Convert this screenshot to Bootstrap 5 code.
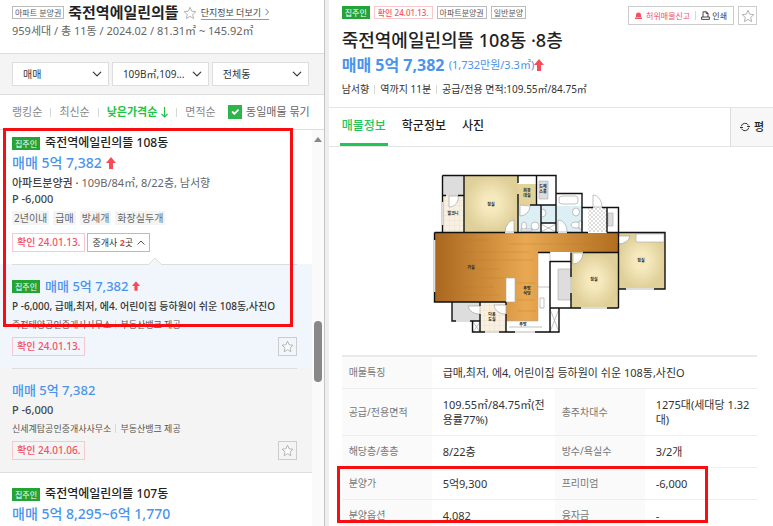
<!DOCTYPE html>
<html lang="ko">
<head>
<meta charset="utf-8">
<meta name="viewport" content="width=device-width, initial-scale=1">
<title>죽전역에일린의뜰 108동</title>
<link rel="stylesheet" href="https://cdn.jsdelivr.net/npm/bootstrap@5.3.0/dist/css/bootstrap.min.css">
<style>
  body { font-family: "Noto Sans", "Noto Sans CJK KR", sans-serif; font-size: 11px; line-height: 16px; color: #333; background: #eee; }
  a { color: inherit; text-decoration: none; }
  button { font-family: inherit; }
  svg { display: block; flex: none; }
  .list-pane { width: 42%; border-right: 1px solid #c4c4c4; }

  .complex-head { padding: 3px 12px 13px; border-bottom: 1px solid #ddd; }
  .complex-name { font-size: 15px; line-height: 19px; font-weight: 700; color: #222; margin: 0; }
  .kind { font-size: 8px; line-height: 11px; border: 1px solid #bbb; padding: 0 2px; color: #555; white-space: nowrap; }
  .more-link { font-size: 9px; line-height: 13px; border-bottom: 1px solid #999; color: #444; }
  .complex-sum { font-size: 11px; line-height: 18px; color: #666; margin: 0; }

  .filters { background: #f4f4f4; padding: 8px 15px 8px 12px; gap: 3px; border-bottom: 1px solid #ddd; }
  .filters .form-select { font-size: 10px; line-height: 14px; height: 24px; padding: 4px 22px 4px 10px; border: 1px solid #ddd; border-radius: 0; color: #333; background-size: 10px 10px; background-position: right 6px center; min-width: 0; text-overflow: clip; }
  .sorts { padding: 9px 14px 9px 12px; color: #888; border-bottom: 1px solid #ddd; }
  .sep { width: 1px; height: 9px; background: #d8d8d8; }
  .sorts .on { color: #1ec545; font-weight: 700; }
  .sorts .form-check-input { width: 14px; height: 14px; margin: 0; border-radius: 0; }
  .sorts .form-check-input:checked { background-color: #2db44a; border-color: #2db44a; }
  .sorts label { color: #666; }

  .owner { background: #24a337; color: #fff; font-size: 8px; line-height: 13px; padding: 0 3px; white-space: nowrap; }
  .item { padding: 4px 15px 12px 12px; background: #fff; }
  .item-name { font-size: 12px; line-height: 18px; font-weight: 500; color: #222; margin: 0; }
  .price { font-size: 14px; line-height: 22px; font-weight: 500; color: #4a94ec; }
  .item p { margin: 0; }
  .meta { color: #666; line-height: 17px; }
  .meta b, .premium { font-weight: 500; color: #444; }
  .premium { line-height: 16px; }
  .tagbox { background: #f4f4f4; color: #666; font-size: 10px; line-height: 14px; padding: 0 2px; }
  .checked { border: 1px solid #f9c8cc; color: #f6505e; font-size: 10px; line-height: 17px; padding: 0 4px; font-weight: 500; background: #fff; white-space: nowrap; }
  .agents { border: 1px solid #bbb; background: #fff; color: #333; font-size: 9px; line-height: 17px; padding: 0 4px; }
  .agents b { color: #f6404e; }
  .pair { gap: 2px; }
  .badged { gap: 5px; }
  .fav { border: 1px solid #ccc; background: transparent; width: 19px; height: 19px; padding: 0; display: grid; place-items: center; }
  .sub { padding: 0 15px 0 12px; }
  .sub-in { border-top: 1px solid #ddd; padding: 10px 0 12px; position: relative; }
  .sub.sel { background: #f1f6fd; }
  .sub.more { background: #f4f4f4; border-bottom: 1px solid #ddd; }
  .sub .price { font-size: 13px; line-height: 22px; }
  .sub p { margin: 0; white-space: nowrap; }
  .sub .desc { color: #333; font-size: 10px; line-height: 18px; font-weight: 500; }
  .sub .premium { line-height: 18px; }
  .agency { font-size: 9px; line-height: 19px; color: #555; }
  .sub .foot { margin-top: 3px; }
  .sub .checked { background: transparent; }
  .notch { position: absolute; left: 136px; top: -8px; }
  .marker { position: absolute; border: 3px solid #f90d10; pointer-events: none; }
  .marker-list { left: 3px; right: 31px; top: 128px; height: 199px; }
  .marker-table { left: -5px; right: 49px; top: 111px; height: 57px; }
  .rail { width: 12px; background: #fafafa; padding: 7px 2px 0; }
  .thumb { width: 8px; height: 61px; border-radius: 4px; background: #888; margin-top: 179px; }

  .detail-pane { margin-left: 4px; }
  .detail-head { padding: 6px 16px 10px 13px; border-bottom: 1px solid #e4e4e4; }
  .detail-head .chip { font-size: 8px; line-height: 11px; border: 1px solid #bbb; padding: 0 2px; color: #555; }
  .detail-head .chip.red { border-color: #f9c8cc; color: #f6505e; font-weight: 500; padding: 0 3px; }
  .detail-name { font-size: 18px; line-height: 26px; font-weight: 500; color: #222; margin: 2px 0 0; }
  .detail-price { font-size: 16px; line-height: 24px; font-weight: 700; color: #4a94ec; }
  .detail-price small { font-size: 11px; font-weight: 400; }
  .detail-meta { font-size: 10px; line-height: 16px; margin-top: 4px; }
  .detail-meta .sep { margin: 0 1px; }
  .detail-meta, .agency { white-space: nowrap; }
  .tools { border: 1px solid #ccc; height: 19px; padding: 0 6px; gap: 5px; }
  .tools button { border: 0; background: none; padding: 0; font-size: 8px; line-height: 15px; color: #333; }
  .tools .report { color: #f6505e; }
  .tabs { border-bottom: 1px solid #e4e4e4; padding-left: 11px; height: 39px; }
  .tabs .nav-link { font-size: 12px; line-height: 17px; font-weight: 500; color: #222; padding: 9px 2px; border-bottom: 3px solid transparent; margin-right: 12px; }
  .tabs .nav-link.active { color: #1fc55b; border-color: #1fc55b; }
  .unit { background: #f7f7f7; border: 0; border-left: 1px solid #ddd; font-size: 11px; font-weight: 500; color: #222; width: 43px; padding: 0; }
  .detail-body { padding: 27px 16px 0 13px; }
  .plan { width: 234px; margin: 0 auto 19px; }
  .facts { border-top: 2px solid #e9e9e9; margin: 0; table-layout: fixed; width: 100%; }
  .facts th, .facts td { border-bottom: 1px solid #eee; vertical-align: middle; line-height: 15px; }
  .facts th { background: #fafafa; color: #777; font-weight: 400; font-size: 10px; padding: 8px 7px; }
  .facts td { color: #333; padding: 8px 4px 8px 11px; }
  .facts .c1 { width: 90px; }
  .facts .c2 { width: 123px; }
  .plan text { font: 700 4px "Noto Sans CJK KR", sans-serif; fill: #222; text-anchor: middle; }
</style>
<script src="https://cdn.jsdelivr.net/npm/bootstrap@5.3.0/dist/js/bootstrap.bundle.min.js"></script>
</head>
<body>
<svg width="0" height="0" class="position-absolute" aria-hidden="true">
  <symbol id="star" viewBox="0 0 14 14"><path d="M7 1.3 8.7 5.2 12.9 5.6 9.7 8.4 10.6 12.6 7 10.4 3.4 12.6 4.3 8.4 1.1 5.6 5.3 5.2Z" fill="#fff" stroke="#aaa" stroke-width=".9"/></symbol>
  <symbol id="up" viewBox="0 0 10 12"><path d="M5 0 10 6H7V12H3V6H0Z" fill="#f74b5a"/></symbol>
</svg>
<div class="d-flex vh-100 overflow-hidden">

  <aside class="list-pane bg-white flex-shrink-0 d-flex flex-column position-relative overflow-hidden">
    <header class="complex-head">
      <div class="d-flex align-items-center text-nowrap">
        <span class="kind">아파트 분양권</span>
        <h1 class="complex-name ms-1">죽전역에일린의뜰</h1>
        <svg class="ms-1" width="14" height="14"><use href="#star"/></svg>
        <a href="#" class="more-link ms-1 d-flex align-items-center">단지정보 더보기<svg class="ms-1" width="4" height="8" viewBox="0 0 4 8"><path d="M.5.8 3.5 4 .5 7.2" fill="none" stroke="#777"/></svg></a>
      </div>
      <p class="complex-sum text-nowrap">959세대 / 총 11동 / 2024.02 / 81.31㎡ ~ 145.92㎡</p>
    </header>
    <form class="filters d-flex">
      <select class="form-select" aria-label="거래유형"><option>매매</option></select>
      <select class="form-select" aria-label="면적"><option>109B㎡,109...</option></select>
      <select class="form-select" aria-label="동"><option>전체동</option></select>
    </form>
    <div class="sorts d-flex align-items-center justify-content-between text-nowrap">
      <nav class="d-flex align-items-center gap-2">
        <a href="#">랭킹순</a><i class="sep"></i><a href="#">최신순</a><i class="sep"></i>
        <a href="#" class="on d-flex align-items-center">낮은가격순<svg class="ms-1" width="7" height="11" viewBox="0 0 7 11"><path d="M3.5 0V10M.5 7 3.5 10 6.5 7" fill="none" stroke="#1ec545" stroke-width="1.2"/></svg></a>
        <i class="sep"></i><a href="#">면적순</a>
      </nav>
      <div class="d-flex align-items-center gap-1">
        <input class="form-check-input" type="checkbox" id="group" checked><label for="group">동일매물 묶기</label>
      </div>
    </div>

    <div class="d-flex flex-grow-1 overflow-hidden">
      <div class="flex-grow-1 overflow-hidden">
        <article class="item">
          <div class="badged d-flex align-items-center"><span class="owner">집주인</span><h2 class="item-name">죽전역에일린의뜰 108동</h2></div>
          <div class="price d-flex align-items-center">매매 5억 7,382<svg class="ms-1" width="10" height="12"><use href="#up"/></svg></div>
          <p class="meta"><b>아파트분양권 ·</b> 109B/84㎡, 8/22층, 남서향</p>
          <p class="premium">P -6,000</p>
          <div class="d-flex gap-1 mt-1"><span class="tagbox">2년이내</span><span class="tagbox">급매</span><span class="tagbox">방세개</span><span class="tagbox">화장실두개</span></div>
          <div class="pair d-flex mt-2"><span class="checked">확인 24.01.13.</span>
            <button type="button" class="agents d-flex align-items-center">중개사&nbsp;<b>2</b>곳<svg class="ms-1" width="8" height="5" viewBox="0 0 8 5"><path d="M.5 4.5 4 1 7.5 4.5" fill="none" stroke="#555"/></svg></button></div>
        </article>
        <article class="sub sel"><div class="sub-in">
          <svg class="notch" width="14" height="8" viewBox="0 0 14 8"><path d="M0 8 7 1 14 8" fill="#f4f4f4" stroke="#ddd"/></svg>
          <div class="badged d-flex align-items-center"><span class="owner">집주인</span><span class="price d-flex align-items-center">매매 5억 7,382<svg class="ms-1" width="8" height="10"><use href="#up"/></svg></span></div>
          <p class="desc">P -6,000, 급매,최저, 에4. 어린이집 등하원이 쉬운 108동,사진O</p>
          <div class="agency d-flex align-items-center gap-1">죽전태양공인중개사사무소<i class="sep"></i>부동산뱅크 제공</div>
          <div class="foot d-flex justify-content-between"><span class="checked">확인 24.01.13.</span><button type="button" class="fav" aria-label="관심매물"><svg width="13" height="13"><use href="#star"/></svg></button></div>
        </div></article>
        <article class="sub more"><div class="sub-in">
          <div class="price">매매 5억 7,382</div>
          <p class="premium">P -6,000</p>
          <div class="agency d-flex align-items-center gap-1">신세계탑공인중개사사무소<i class="sep"></i>부동산뱅크 제공</div>
          <div class="foot d-flex justify-content-between"><span class="checked">확인 24.01.06.</span><button type="button" class="fav" aria-label="관심매물"><svg width="13" height="13"><use href="#star"/></svg></button></div>
        </div></article>
        <article class="item pt-2 mt-1">
          <div class="badged d-flex align-items-center"><span class="owner">집주인</span><h2 class="item-name">죽전역에일린의뜰 107동</h2></div>
          <div class="price">매매 5억 8,295~6억 1,770</div>
        </article>
      </div>
      <div class="rail flex-shrink-0"><svg width="8" height="5" viewBox="0 0 8 5"><path d="M4 0 8 5H0Z" fill="#888"/></svg><div class="thumb"></div></div>
    </div>
    <div class="marker marker-list"></div>
  </aside>

  <main class="detail-pane bg-white flex-grow-1 overflow-hidden">
    <header class="detail-head text-nowrap">
      <div class="d-flex justify-content-between align-items-start">
        <div class="d-flex gap-1"><span class="owner">집주인</span><span class="chip red">확인 24.01.13.</span><span class="chip">아파트분양권</span><span class="chip">일반분양</span></div>
        <div class="d-flex gap-1">
          <div class="tools d-flex align-items-center">
            <button type="button" class="report d-flex align-items-center gap-1"><svg width="7" height="7" viewBox="0 0 7 7"><path d="M1 5V3a2.5 2.5 0 0 1 5 0v2ZM0 5.5h7V7H0Z" fill="#f6505e"/></svg>허위매물신고</button>
            <i class="sep"></i>
            <button type="button" class="d-flex align-items-center"><svg width="9" height="9" viewBox="0 0 9 9"><path d="M2 6V.8H5.5L7 2.3V6M5.2.8V2.5H7M.6 6H8.4V8.4H.6Z" fill="none" stroke="#333" stroke-width=".9"/></svg>&nbsp;인쇄</button>
          </div>
          <button type="button" class="fav" aria-label="관심매물"><svg width="14" height="14"><use href="#star"/></svg></button>
        </div>
      </div>
      <h2 class="detail-name">죽전역에일린의뜰 108동 ·8층</h2>
      <div class="detail-price d-flex align-items-center">매매 5억 7,382&nbsp;<small>(1,732만원/3.3㎡)</small><svg width="10" height="12"><use href="#up"/></svg></div>
      <div class="detail-meta d-flex align-items-center gap-1">남서향<i class="sep"></i>역까지 11분<i class="sep"></i>공급/전용 면적:109.55㎡/84.75㎡</div>
    </header>
    <div class="tabs d-flex justify-content-between">
      <nav class="nav flex-nowrap text-nowrap"><a class="nav-link active" href="#">매물정보</a><a class="nav-link" href="#">학군정보</a><a class="nav-link" href="#">사진</a></nav>
      <button type="button" class="unit d-flex align-items-center justify-content-center gap-1"><svg width="10" height="10" viewBox="0 0 10 10"><path d="M1.2 4.3A4 4 0 0 1 8.6 3.4M8.8 5.7A4 4 0 0 1 1.4 6.6M7 4.5H10M0 5.5H3" fill="none" stroke="#333"/></svg>평</button>
    </div>
    <div class="detail-body">
      <svg class="plan" height="162" viewBox="433 174 234 162" role="img" aria-label="평면도">
        <defs>
          <radialGradient id="room"><stop offset=".3" stop-color="#f5e9bd"/><stop offset="1" stop-color="#dfcf98"/></radialGradient>
          <linearGradient id="wood"><stop offset="0" stop-color="#a8661f"/><stop offset=".3" stop-color="#d08e3c"/><stop offset=".5" stop-color="#e9a852"/><stop offset="1" stop-color="#b06e1f"/></linearGradient>
          <pattern id="tile" width="5" height="5" patternUnits="userSpaceOnUse"><path d="M0 0H5V5H0Z" fill="#f8f0e0"/><path d="M0 0H5M0 0V5" stroke="#e6dac6" stroke-width=".6"/></pattern>
          <pattern id="chk" width="4" height="4" patternUnits="userSpaceOnUse"><path d="M0 0H4V4H0Z" fill="#fff"/><path d="M0 0H2V2H0ZM2 2H4V4H2Z" fill="#ddd"/></pattern>
        </defs>
        <path d="M443 175H465V196H443ZM453 302H481V321H453Z" fill="#ddd"/>
        <path d="M443 196H465V232H443ZM481 302H507V332H481Z" fill="url(#tile)"/>
        <rect x="465" y="175" width="54" height="57" fill="url(#room)"/>
        <rect x="519" y="184" width="19" height="21" fill="#e2d39b"/>
        <path d="M519 205H557V223H542V232H519ZM557 206H583V232H557Z" fill="#dceff5"/>
        <path d="M589 207H608V232H589Z" fill="url(#chk)"/>
        <path d="M435 233H619V252H539V321H507V302H435Z" fill="url(#wood)"/>
        <path d="M440 240H490M510 244H590M450 252H530M470 260H535M440 269H500M480 278H505M518 283H536M445 287H495M518 300H536M460 295H500M518 311H537" stroke="#bd7a2a" stroke-width=".5" opacity=".6"/>
        <rect x="572" y="252" width="47" height="56" fill="url(#room)"/>
        <rect x="619" y="233" width="47" height="56" fill="url(#room)"/>
        <path d="M507 278H516V302H507ZM637 234H665V242H637ZM539 252H551V332H507V321H539Z" fill="#fff" stroke="#aaa" stroke-width=".6"/>
        <path d="M540 181H549V199H540ZM609 213H614V226H609ZM559 269H572V300H559Z" fill="#ddd" stroke="#aaa" stroke-width=".6"/>
        <g fill="#fff" stroke="#999" stroke-width=".6">
          <path d="M450 196V207A9 9 0 0 0 459 196ZM515 232V220A10 12 0 0 0 506 232ZM521 205V216A10 10 0 0 0 531 206ZM559 232V220A9 11 0 0 1 568 232ZM603 207H594V195A9 12 0 0 1 603 207ZM481 306H469A11 10 0 0 0 481 314ZM507 305H495A11 10 0 0 0 507 314ZM574 253V264A10 11 0 0 0 584 253ZM619 236H631A12 9 0 0 1 619 244Z"/>
          <rect x="560" y="196" width="19" height="8" rx="3"/>
          <ellipse cx="577" cy="212" rx="3.5" ry="4"/><ellipse cx="577" cy="225" rx="5" ry="3"/><path d="M580 221H583V229H580Z"/>
          <circle cx="536" cy="226" r="4"/><ellipse cx="525" cy="226" rx="2.5" ry="4"/><path d="M522 229H533V231H522ZM543 209A4 4 0 0 1 543 217"/>
          <path d="M542 224 557 232M557 224 542 232M474 322 481 332M481 322 474 332M551 309 560 332M560 309 551 332" fill="none"/>
          <path d="M539 287H551M541 298H545V308H541ZM510 327H543" fill="none"/>
        </g>
        <g fill="none" stroke="#111" stroke-width="1.4">
          <path d="M443.500 175.500H557V232.500M443.500 175.500V232.500M465 175.500V232.500M443 195.500H447M459 195.500H465M519 175.500V183M519 194V232.500M537.500 175.500V205M531 205H557M542 205V232.500M542 223H557M557 193.500H583V232.500M583 207.500H594M603 207.500H619.500V308M608 207.500V232.500"/>
          <path d="M435.500 232.500H506M515 232.500H559M568 232.500H589M608 232.500H666V289H619M435.500 232.500V302H507M453 302V321H481M481 302V306M481 314V332M473.500 321V332H560V308M507 302V305M507 314V332M539 252.500H551M584 252.500H619M551 261V332M551 261.500H572M572 252.500V308M551 308H619.500"/>
        </g>
        <path d="M435.500 240V292M443.500 202V225M457 321H471M486 332H500M516 332H536M582 308H608M627 289H655M572 277V293" stroke="#ddd" stroke-width="1.800"/>
        <text x="492" y="206">침실</text><text x="454" y="215">발코니</text><text x="472" y="269">거실</text><text x="595" y="281">침실</text><text x="642" y="262">침실</text>
        <text x="528" y="192">화장</text><text x="528" y="197">대실</text><text x="544" y="188">드레</text><text x="544" y="193">스룸</text>
        <text x="528" y="290">주방</text><text x="528" y="295">식당</text><text x="493" y="316">다용</text><text x="493" y="321">도실</text><text x="524" y="326">주방</text>
      </svg>
      <div class="position-relative">
        <table class="facts">
          <colgroup><col class="c1"><col class="c2"><col class="c1"><col></colgroup>
          <tbody>
            <tr><th scope="row">매물특징</th><td colspan="3">급매,최저, 에4, 어린이집 등하원이 쉬운 108동,사진O</td></tr>
            <tr><th scope="row">공급/전용면적</th><td>109.55㎡/84.75㎡(전용률77%)</td><th scope="row">총주차대수</th><td>1275대(세대당 1.32대)</td></tr>
            <tr><th scope="row">해당층/총층</th><td>8/22층</td><th scope="row">방수/욕실수</th><td>3/2개</td></tr>
            <tr><th scope="row">분양가</th><td>5억9,300</td><th scope="row">프리미엄</th><td>-6,000</td></tr>
            <tr><th scope="row">분양옵션</th><td>4,082</td><th scope="row">융자금</th><td>-</td></tr>
          </tbody>
        </table>
        <div class="marker marker-table"></div>
      </div>
    </div>
  </main>
</div>
</body>
</html>
